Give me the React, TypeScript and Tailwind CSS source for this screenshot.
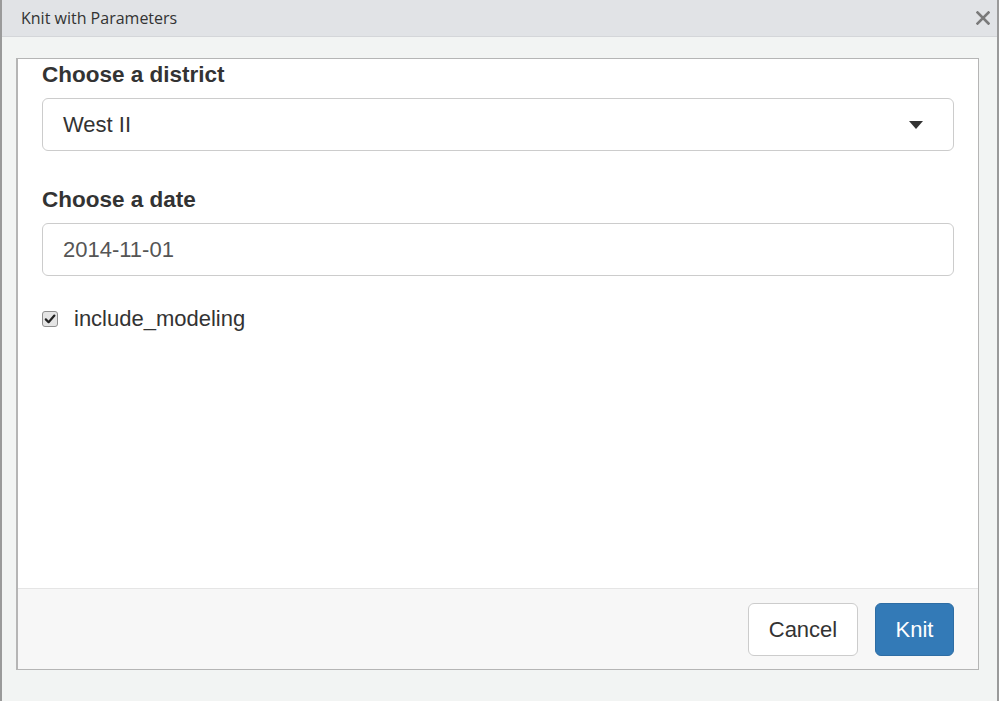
import React, { useState } from 'react';

const font = { fontFamily: '"Liberation Sans", Arial, sans-serif' };

function Caret() {
  return (
    <svg width="14" height="8" viewBox="0 0 14 8" className="shrink-0">
      <path d="M0 0 L14 0 L7 8 Z" fill="#333" />
    </svg>
  );
}

function CloseIcon() {
  return (
    <svg width="14" height="14" viewBox="0 0 14 14">
      <path d="M1.5 1.5 L12.5 12.5 M12.5 1.5 L1.5 12.5" stroke="#7a7a7a" strokeWidth="2.6" strokeLinecap="square" />
    </svg>
  );
}

function CheckBox({ checked, onToggle }: { checked: boolean; onToggle: () => void }) {
  return (
    <button
      type="button"
      onClick={onToggle}
      className="w-4 h-4 rounded-[3px] border border-[#8f8f8f] bg-[#e4e4e4] flex items-center justify-center shrink-0"
    >
      {checked && (
        <svg width="12" height="12" viewBox="0 0 12 12">
          <path d="M1.8 6.4 L4.6 9.2 L10.4 2.6" stroke="#222" strokeWidth="2.2" fill="none" strokeLinecap="round" strokeLinejoin="round" />
        </svg>
      )}
    </button>
  );
}

export default function App() {
  const [district] = useState('West II');
  const [date, setDate] = useState('2014-11-01');
  const [modeling, setModeling] = useState(true);

  return (
    <div className="w-[999px] h-[701px] flex flex-col bg-[#f2f4f3] border-l-2 border-r-2 border-[#9a9a9a] overflow-hidden" style={font}>
      {/* title bar */}
      <div className="h-[37px] shrink-0 flex items-center justify-between bg-[#e1e3e6] border-b border-[#d4d6d9] pl-[19px] pr-[7px]">
        <span className="text-[16px] text-[#333]" style={{ fontFamily: '"Open Sans", "Noto Sans", sans-serif' }}>
          Knit with Parameters
        </span>
        <CloseIcon />
      </div>

      {/* dialog body */}
      <div className="flex-1 pt-[21px] pl-[14px]">
        <div className="w-[963px] h-[612px] flex flex-col bg-white border border-l-2 border-[#b5b5b5]">
          <div className="flex-1 px-6 text-[22px] leading-[31px] text-[#333]">
            <label className="block font-bold text-[22.5px] mb-2">Choose a district</label>
            <div className="h-[53px] flex items-center justify-between border border-[#ccc] rounded-[6px] pl-[20px] pr-[30px] text-[#333]">
              <span>{district}</span>
              <Caret />
            </div>

            <label className="block font-bold text-[22.5px] mt-[33px] mb-2">Choose a date</label>
            <input
              value={date}
              onChange={(e) => setDate(e.target.value)}
              className="w-full h-[53px] border border-[#ccc] rounded-[6px] px-[20px] text-[#555] outline-none"
            />

            <div className="flex items-center gap-4 mt-[27px]">
              <CheckBox checked={modeling} onToggle={() => setModeling(!modeling)} />
              <span>include_modeling</span>
            </div>
          </div>

          <div className="h-[81px] shrink-0 flex items-center justify-end gap-[17px] pr-6 bg-[#f7f7f7] border-t border-[#e5e5e5] text-[22px]">
            <button className="w-[110px] h-[53px] bg-white border border-[#ccc] rounded-[6px] text-[#333]">
              Cancel
            </button>
            <button className="w-[79px] h-[53px] bg-[#337ab7] border border-[#2e6da4] rounded-[6px] text-white">
              Knit
            </button>
          </div>
        </div>
      </div>
    </div>
  );
}
